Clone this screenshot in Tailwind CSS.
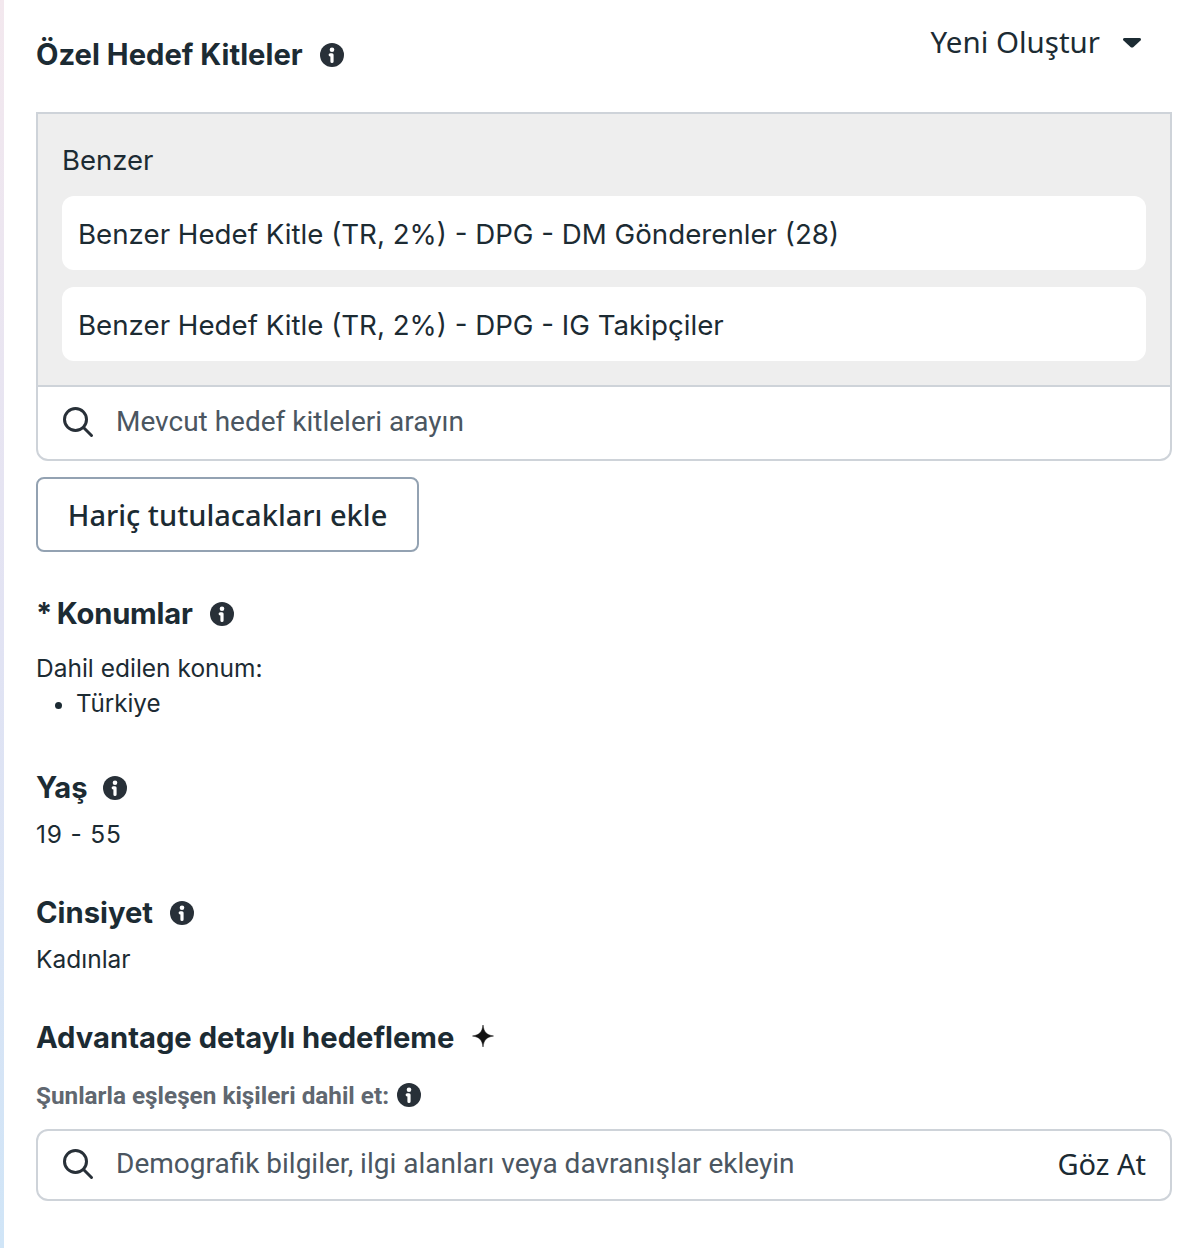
<!DOCTYPE html>
<html lang="en">
<head>
    <meta charset="UTF-8">
    <title>Özel Hedef Kitleler</title>
    <script src="https://cdn.jsdelivr.net/npm/@tailwindcss/browser@4"></script>
</head>
<body class="bg-white">
    <div class="flex h-[1248px] w-[1204px] overflow-hidden font-['Inter',sans-serif] text-[#1c2b33]">
        <div class="w-[4px] shrink-0 bg-gradient-to-b from-[#f3e8ee] via-[#e2e3f3] to-[#d0e5f7]"></div>
        <main class="w-[1136px] ml-[32px]">
            <!-- header -->
            <div class="flex justify-between h-[112px]">
                <div class="flex items-center h-[32px] mt-[39px]">
                    <h2 class="text-[29.200px] leading-[32px] font-bold">Özel Hedef Kitleler</h2>
                    <svg class="ml-[17px] w-[24px] h-[24px]" viewBox="0 0 24 24"><circle cx="12" cy="12" r="12" fill="#283038"/><circle cx="12" cy="6.800" r="2.300" fill="#fff"/><path d="M10.200 11.800h1.800v6.600" fill="none" stroke="#fff" stroke-width="3.200" stroke-linecap="round" stroke-linejoin="round"/></svg>
                </div>
                <div class="flex items-center h-[32px] mt-[26px] mr-[30px]">
                    <span class="font-['Noto_Sans',sans-serif] text-[29.500px] leading-[32px]">Yeni Oluştur</span>
                    <svg class="ml-[22px] mt-[1px] w-[20px] h-[12px]" viewBox="0 0 20 12"><path d="M2.500 1h15c1.500 0 2 1.500 1 2.500l-7 6.500c-1 .8-2 .8-3 0l-7-6.500C.5 2.500 1 1 2.500 1z" fill="#1c2b33"/></svg>
                </div>
            </div>
            <!-- audience box -->
            <div class="border-2 border-[#ced3d9] rounded-b-[12px]">
                <div class="bg-[#eeeeee] h-[271px] px-[24px] pt-[29px]">
                    <div class="text-[27.500px] leading-[34px]">Benzer</div>
                    <div class="mt-[19px] flex flex-col gap-[17px]">
                        <div class="bg-white rounded-[12px] h-[74px] px-[16px] pt-[4px] flex items-center text-[27.700px]">Benzer Hedef Kitle (TR, 2%) - DPG - DM Gönderenler (28)</div>
                        <div class="bg-white rounded-[12px] h-[74px] px-[16px] pt-[4px] flex items-center text-[27.700px]">Benzer Hedef Kitle (TR, 2%) - DPG - IG Takipçiler</div>
                    </div>
                </div>
                <div class="border-t-2 border-[#ced3d9] h-[74px] flex items-center pl-[24px] pb-[2px]">
                    <svg class="w-[32px] h-[32px]" viewBox="0 0 32 32" fill="none" stroke="#283038" stroke-width="3" stroke-linecap="round"><circle cx="13.500" cy="13.500" r="11"/><path d="M21.500 21.500l8 8"/></svg>
                    <span class="ml-[22px] font-['Roboto',sans-serif] text-[28px] text-[#4b5661]">Mevcut hedef kitleleri arayın</span>
                </div>
            </div>
            <button class="mt-[16px] w-[383px] h-[75px] border-2 border-[#93a2b2] rounded-[8px] font-['Noto_Sans',sans-serif] text-[29px] font-medium">Hariç tutulacakları ekle</button>
            <!-- locations -->
            <div class="mt-[44px] flex items-center h-[36px]">
                <h3 class="text-[29.200px] font-bold tracking-[-0.200px] [word-spacing:-2px]">* Konumlar</h3>
                <svg class="ml-[17px] w-[24px] h-[24px]" viewBox="0 0 24 24"><circle cx="12" cy="12" r="12" fill="#283038"/><circle cx="12" cy="6.800" r="2.300" fill="#fff"/><path d="M10.200 11.800h1.800v6.600" fill="none" stroke="#fff" stroke-width="3.200" stroke-linecap="round" stroke-linejoin="round"/></svg>
            </div>
            <p class="mt-[19px] text-[24.500px] leading-[35px]">Dahil edilen konum:</p>
            <div class="flex items-center h-[36px] text-[24.200px]">
                <span class="ml-[19px] mt-[3px] w-[7px] h-[7px] rounded-full bg-[#1c2b33]"></span>
                <span class="ml-[14px]">Türkiye</span>
            </div>
            <!-- age -->
            <div class="mt-[48px] flex items-center h-[36px]">
                <h3 class="text-[29.200px] font-bold">Yaş</h3>
                <svg class="ml-[15px] w-[24px] h-[24px]" viewBox="0 0 24 24"><circle cx="12" cy="12" r="12" fill="#283038"/><circle cx="12" cy="6.800" r="2.300" fill="#fff"/><path d="M10.200 11.800h1.800v6.600" fill="none" stroke="#fff" stroke-width="3.200" stroke-linecap="round" stroke-linejoin="round"/></svg>
            </div>
            <p class="mt-[10px] text-[24.500px] leading-[36px] tracking-[0.800px]">19 - 55</p>
            <!-- gender -->
            <div class="mt-[43px] flex items-center h-[36px]">
                <h3 class="text-[29.200px] font-bold">Cinsiyet</h3>
                <svg class="ml-[17px] w-[24px] h-[24px]" viewBox="0 0 24 24"><circle cx="12" cy="12" r="12" fill="#283038"/><circle cx="12" cy="6.800" r="2.300" fill="#fff"/><path d="M10.200 11.800h1.800v6.600" fill="none" stroke="#fff" stroke-width="3.200" stroke-linecap="round" stroke-linejoin="round"/></svg>
            </div>
            <p class="mt-[10px] text-[24.500px] leading-[36px]">Kadınlar</p>
            <!-- detailed targeting -->
            <div class="mt-[43px] flex items-center h-[36px]">
                <h3 class="text-[29.200px] font-bold">Advantage detaylı hedefleme</h3>
                <svg class="ml-[17px] mb-[4px] w-[24px] h-[24px]" viewBox="0 0 24 24"><path d="M12 1c.9 6.800 3 9.800 10.500 11-7.500 1.200-9.600 4.200-10.500 11-.9-6.800-3-9.800-10.500-11C9 10.800 11.100 7.800 12 1z" fill="#111" stroke="#111" stroke-width=".5"/></svg>
            </div>
            <div class="mt-[26px] flex items-center h-[28px] font-['Roboto',sans-serif] text-[24.300px] font-bold text-[#606770]">
                <span>Şunlarla eşleşen kişileri dahil et:</span>
                <svg class="ml-[8px] mb-[2px] w-[24px] h-[24px]" viewBox="0 0 24 24"><circle cx="12" cy="12" r="12" fill="#283038"/><circle cx="12" cy="6.800" r="2.300" fill="#fff"/><path d="M10.200 11.800h1.800v6.600" fill="none" stroke="#fff" stroke-width="3.200" stroke-linecap="round" stroke-linejoin="round"/></svg>
            </div>
            <div class="mt-[19px] h-[72px] border-2 border-[#ced3d9] rounded-[12px] flex items-center pl-[24px] pr-[24px] pb-[3px]">
                <svg class="w-[32px] h-[32px]" viewBox="0 0 32 32" fill="none" stroke="#283038" stroke-width="3" stroke-linecap="round"><circle cx="13.500" cy="13.500" r="11"/><path d="M21.500 21.500l8 8"/></svg>
                <span class="ml-[22px] font-['Roboto',sans-serif] text-[28px] text-[#4b5661]">Demografik bilgiler, ilgi alanları veya davranışlar ekleyin</span>
                <span class="ml-auto font-['Noto_Sans',sans-serif] text-[29px]">Göz At</span>
            </div>
        </main>
    </div>
</body>
</html>
